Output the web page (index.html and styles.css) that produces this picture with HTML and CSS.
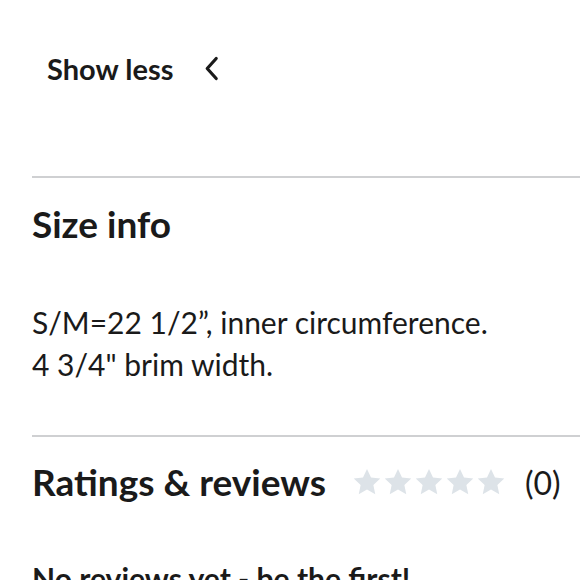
FILE: index.html
```html
<!DOCTYPE html>
<html lang="en">
<head>
    <meta charset="UTF-8">
    <title>Product details</title>
    <link rel="stylesheet" href="styles.css">
</head>
<body>
    <div class="details">
        <!-- Toggle for the long description -->
        <button class="show-less" type="button">
            <span>Show less</span>
            <svg class="chevron" width="16" height="26" viewBox="0 0 16 26">
                <path d="M12.2 2.5 L3.2 12.5 L12.2 22.5" fill="none" stroke="#1a1a1a" stroke-width="3.2" stroke-linecap="round" stroke-linejoin="round"/>
            </svg>
        </button>

        <section class="section size-info">
            <h2>Size info</h2>
            <p class="size-text">S/M=22 1/2”, inner circumference.<br>4 3/4" brim width.</p>
        </section>

        <section class="section ratings">
            <div class="ratings-head">
                <h2>Ratings &amp; reviews</h2>
                <div class="stars">
                    <svg viewBox="0 0 24 24"><path d="M12 1.5l3.2 6.9 7.4.8-5.5 5.1 1.5 7.4L12 18l-6.6 3.7 1.5-7.4L1.4 9.2l7.4-.8z"/></svg>
                    <svg viewBox="0 0 24 24"><path d="M12 1.5l3.2 6.9 7.4.8-5.5 5.1 1.5 7.4L12 18l-6.6 3.7 1.5-7.4L1.4 9.2l7.4-.8z"/></svg>
                    <svg viewBox="0 0 24 24"><path d="M12 1.5l3.2 6.9 7.4.8-5.5 5.1 1.5 7.4L12 18l-6.6 3.7 1.5-7.4L1.4 9.2l7.4-.8z"/></svg>
                    <svg viewBox="0 0 24 24"><path d="M12 1.5l3.2 6.9 7.4.8-5.5 5.1 1.5 7.4L12 18l-6.6 3.7 1.5-7.4L1.4 9.2l7.4-.8z"/></svg>
                    <svg viewBox="0 0 24 24"><path d="M12 1.5l3.2 6.9 7.4.8-5.5 5.1 1.5 7.4L12 18l-6.6 3.7 1.5-7.4L1.4 9.2l7.4-.8z"/></svg>
                </div>
                <span class="count">(0)</span>
            </div>
            <p class="no-reviews">No reviews yet - be the first!</p>
        </section>
    </div>
</body>
</html>
```

FILE: styles.css
```css
body {
    margin: 0;
    font-family: 'Lato', 'Noto Sans', sans-serif;
    color: #1a1a1a;
    background: #fff;
    overflow: hidden;
}

.details {
    padding-left: 32px;
}

/* Show less toggle */
.show-less {
    display: flex;
    align-items: flex-start;
    gap: 31px;
    margin-top: 50px;
    padding: 0 15px;
    height: 38px;
    border: none;
    background: none;
    font-family: inherit;
    font-size: 29px;
    line-height: 38px;
    font-weight: 700;
    color: #1a1a1a;
}

.chevron {
    margin-top: 6px;
}

/* Sections */
.section {
    border-top: 2px solid #cfd0d2;
}

.size-info {
    margin-top: 88px;
    padding-top: 23px;
}

.section h2 {
    margin: 0;
    font-size: 37px;
    line-height: 46px;
    font-weight: 700;
}

.size-text {
    margin: 54px 0 50px;
    font-size: 30px;
    line-height: 42px;
}

/* Ratings */
.ratings {
    padding-top: 22px;
}

.ratings-head {
    display: flex;
    align-items: center;
}

.stars {
    display: flex;
    gap: 1px;
    margin-left: 26px;
}

.stars svg {
    width: 30px;
    height: 30px;
    fill: #dde3e8;
}

.count {
    margin-left: 19px;
    font-size: 32px;
}

.no-reviews {
    margin: 55px 0 0;
    font-size: 30px;
    line-height: 36px;
    font-weight: 700;
}
```
